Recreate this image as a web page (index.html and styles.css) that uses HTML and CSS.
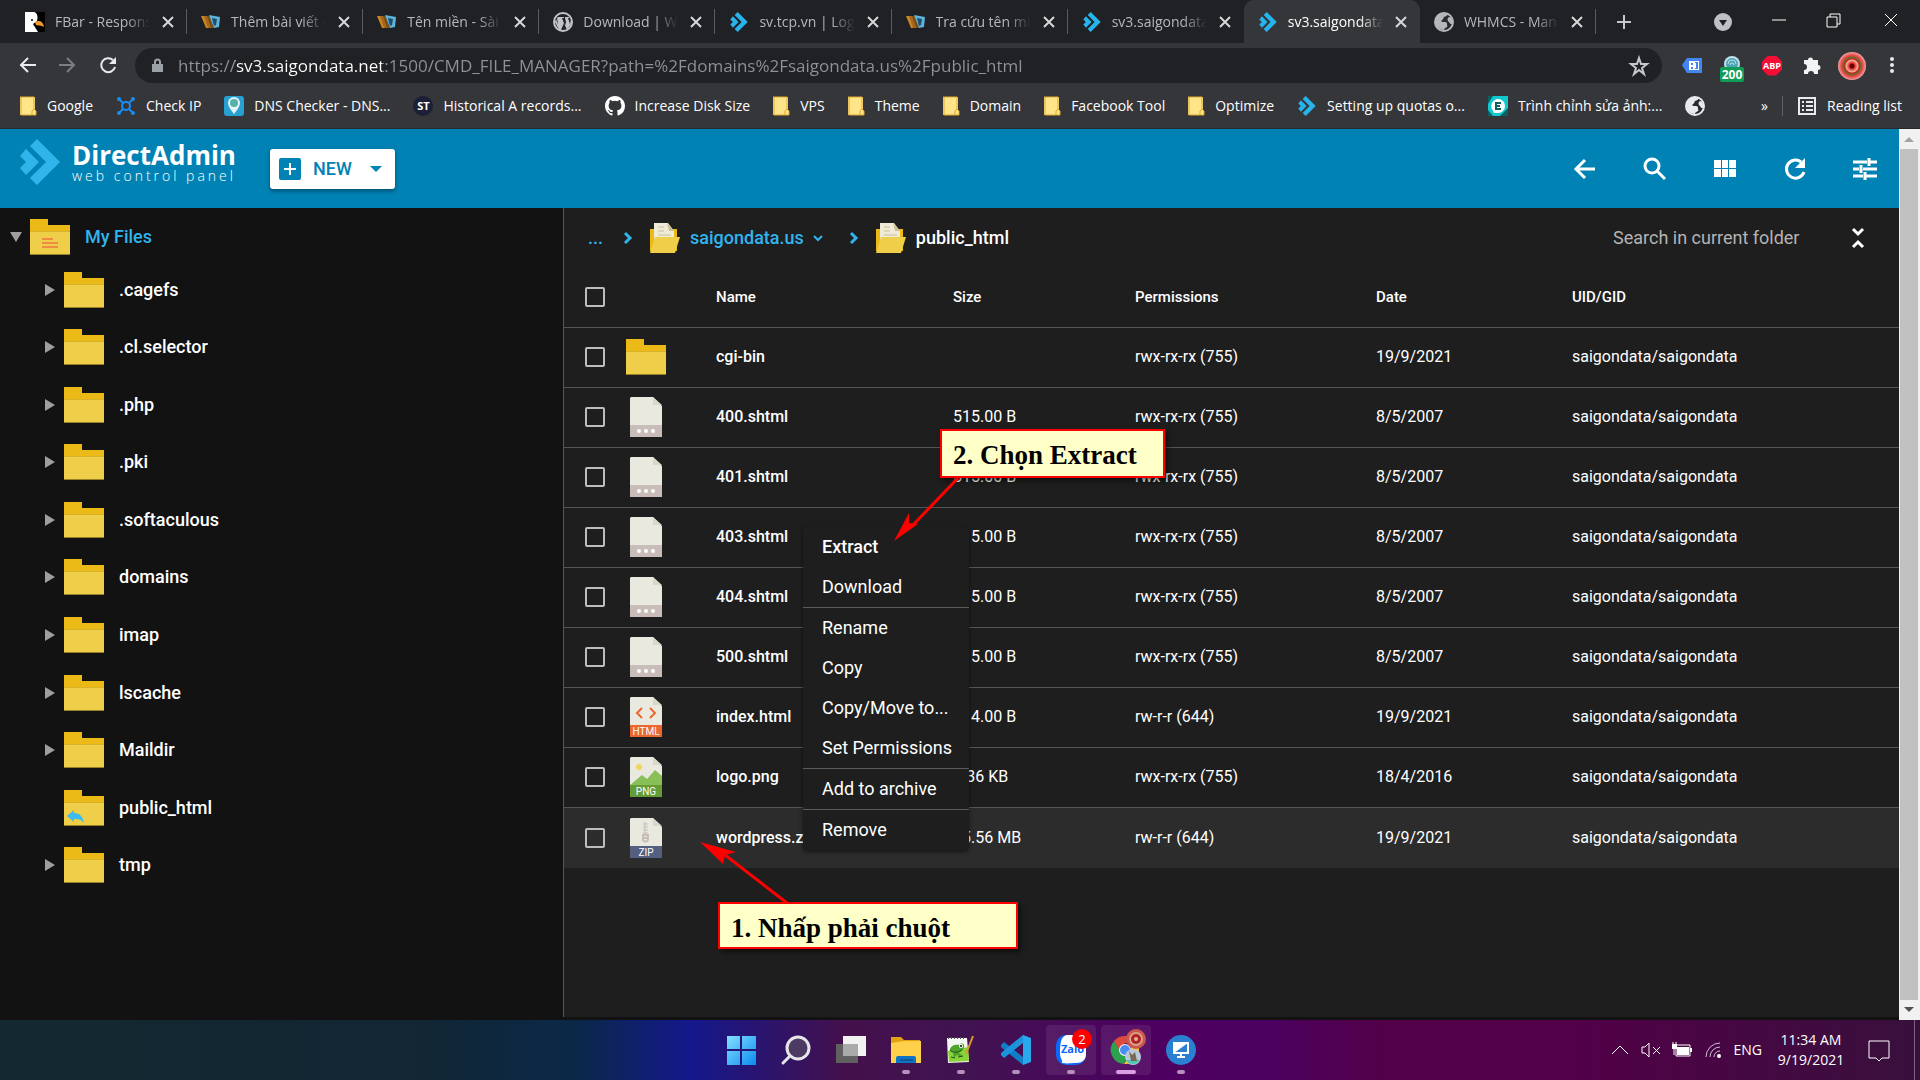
FILE: index.html
```html
<!DOCTYPE html>
<html lang="vi">
<head>
    <meta charset="UTF-8">
    <meta name="viewport" content="width=device-width, initial-scale=1.0">
    <title>File Manager</title>
    <link rel="stylesheet" href="styles.css">
</head>
<body>
    <!-- shared icons -->
    <svg class="sprite" aria-hidden="true">
        <symbol id="da" viewBox="0 0 40 46"><path fill="currentColor" d="M17 0l23 23-23 23-7-7 16-16L10 7zM6 10l13 13L6 36l-6-7 6-6-6-6z"/></symbol>
        <symbol id="close" viewBox="0 0 16 16"><path d="M3 3l10 10M13 3L3 13" stroke="currentColor" stroke-width="2"/></symbol>
        <symbol id="nas" viewBox="0 0 20 20"><path fill="#c8862a" d="M0 4h4l4 12H5z"/><path fill="#a8681c" d="M3 4h4l4 12H7z"/><path fill="#7d4c12" d="M6 4h3l4 12h-3z"/><path fill="#5fb4dd" d="M8 3l11 2-1 10-5 1z"/><path fill="#1d4e6b" d="M11 6l5 1-1 6-2 1z"/></symbol>
        <symbol id="globe" viewBox="0 0 20 20"><circle cx="10" cy="10" r="9" fill="#292a2d" stroke="currentColor" stroke-width="2"/><path fill="currentColor" d="M1 10C1 5 4 1 9 1c2 0 3 0 5 1-1 2-2 2-4 3-1 1 0 2-2 3-1 1-1 2 1 2 3 0 4 0 4 2s1 2 0 3-3 1-3 3c-5 0-9-4-9-8zM15 5c2 0 4 3 4 6-2 2-3 1-4-1-2-1-2-4 0-5z"/></symbol>
        <symbol id="bm-folder" viewBox="0 0 17 20"><path fill="#ffe48a" d="M0 1h15v13h1v5H0z"/><path fill="none" stroke="#dfa92c" stroke-width="1" d="M0 1h14v12l2 2v4H1V1M12 19v-4l2-2"/></symbol>
        <symbol id="folder" viewBox="0 0 40 36"><path fill="#ebba16" d="M0 0h18v6h22v8H0z"/><path fill="#efce4a" d="M0 13h40v23H0z"/><path fill="#d9b22c" d="M0 12h40v1H0z"/><path fill="#967f28" d="M0 35h40v1H0z"/></symbol>
        <symbol id="folder-open" viewBox="0 0 30 30"><path fill="#ebba16" d="M0 6h27v22H0z"/><path fill="#f0ebd8" d="M4 0h14l6 8v16H4z"/><path fill="#cfbf8c" d="M17 0l7 8h-5z"/><path stroke="#c9bf9c" d="M8 4h6M8 8h6M8 12h13"/><path fill="#efce4a" d="M5 14h25l-5 16H0z"/></symbol>
        <symbol id="file" viewBox="0 0 32 40"><path fill="#e9e9e0" d="M1 0h22l9 9v31H0V1z"/><path fill="#d9d7ca" d="M23 0v8h9z"/></symbol>
        <symbol id="file-any" viewBox="0 0 32 40"><use href="#file"/><path fill="#c8bdb8" d="M0 28h32v12H0z"/><circle cx="9" cy="34" r="2" fill="#fff"/><circle cx="16" cy="34" r="2" fill="#fff"/><circle cx="23" cy="34" r="2" fill="#fff"/></symbol>
        <symbol id="tri-right" viewBox="0 0 12 12"><path fill="#9e9e9e" d="M1 0l10 6-10 6z"/></symbol>
        <symbol id="chev" viewBox="0 0 10 14"><path fill="none" stroke="#31b4ee" stroke-width="3" d="M2 2l5 5-5 5"/></symbol>
    </svg>

    <!-- browser tabs -->
    <header class="tabstrip">
        <div class="tabs">
            <div class="tab"><svg class="fav" viewBox="0 0 20 20"><path d="M0 0h20v20H0z"/><path fill="#fff" d="M0 0h9c4 1 4 6 3 9l-4 3 5 8H0z"/><path fill="#f29a2e" d="M10 10c4-2 8-1 9 5-3-2-6-1-8-2z"/><circle cx="7" cy="8" r="1"/></svg><span class="tab-title">FBar - Responsive</span><button class="tab-close" aria-label="Close"><svg><use href="#close"/></svg></button></div>
            <div class="tab"><svg class="fav"><use href="#nas"/></svg><span class="tab-title">Thêm bài viết ‹ Sài</span><button class="tab-close" aria-label="Close"><svg><use href="#close"/></svg></button></div>
            <div class="tab"><svg class="fav"><use href="#nas"/></svg><span class="tab-title">Tên miền - Sài Gòn</span><button class="tab-close" aria-label="Close"><svg><use href="#close"/></svg></button></div>
            <div class="tab"><svg class="fav" viewBox="0 0 20 20"><circle cx="10" cy="10" r="9" fill="none" stroke="#c3c4c7" stroke-width="2"/><path fill="#c3c4c7" d="M3 7l4 11-2-2-3-6zM5 5h6v1h-2l3 8 1-4-1-4V5h4v1h-1l2 6 1-4v4l-4 6-3-7-3 7h-2L4 6z"/></svg><span class="tab-title">Download | WordPress</span><button class="tab-close" aria-label="Close"><svg><use href="#close"/></svg></button></div>
            <div class="tab"><svg class="fav da"><use href="#da"/></svg><span class="tab-title">sv.tcp.vn | Login</span><button class="tab-close" aria-label="Close"><svg><use href="#close"/></svg></button></div>
            <div class="tab"><svg class="fav"><use href="#nas"/></svg><span class="tab-title">Tra cứu tên miền</span><button class="tab-close" aria-label="Close"><svg><use href="#close"/></svg></button></div>
            <div class="tab before-active"><svg class="fav da"><use href="#da"/></svg><span class="tab-title">sv3.saigondata.net</span><button class="tab-close" aria-label="Close"><svg><use href="#close"/></svg></button></div>
            <div class="tab active"><svg class="fav da"><use href="#da"/></svg><span class="tab-title">sv3.saigondata.net</span><button class="tab-close" aria-label="Close"><svg><use href="#close"/></svg></button></div>
            <div class="tab"><svg class="fav"><use href="#globe"/></svg><span class="tab-title">WHMCS - Manage</span><button class="tab-close" aria-label="Close"><svg><use href="#close"/></svg></button></div>
        </div>
        <div class="window-tools">
            <button aria-label="New tab"><svg viewBox="0 0 20 20"><path d="M10 3v14M3 10h14" stroke="#c6c8cb" stroke-width="2"/></svg></button>
            <button class="push" aria-label="Search tabs"><svg viewBox="0 0 20 20"><circle cx="10" cy="10" r="9" fill="#bdc1c6"/><path fill="#202124" d="M6 8h8l-4 6z"/></svg></button>
            <button aria-label="Minimize"><svg viewBox="0 0 20 20"><path d="M3 8h14" stroke="#fff"/></svg></button>
            <button aria-label="Restore"><svg viewBox="0 0 20 20"><path d="M2 5h10v10H2zM5 5V2h10v10h-3" fill="none" stroke="#fff"/></svg></button>
            <button aria-label="Close window"><svg viewBox="0 0 20 20"><path d="M4 2l12 12M16 2L4 14" stroke="#fff"/></svg></button>
        </div>
    </header>

    <!-- address bar -->
    <div class="toolbar">
        <button aria-label="Back"><svg viewBox="0 0 20 20"><path d="M18 9H3M10 2L3 9l7 7" fill="none" stroke="#e8eaed" stroke-width="2"/></svg></button>
        <button aria-label="Forward"><svg viewBox="0 0 20 20"><path d="M1 9h15M9 2l7 7-7 7" fill="none" stroke="#7c7e82" stroke-width="2"/></svg></button>
        <button aria-label="Reload"><svg viewBox="0 0 20 20"><path d="M15 4a7 7 0 1 0 2 7" fill="none" stroke="#e8eaed" stroke-width="2"/><path fill="#e8eaed" d="M18 1v7h-7z"/></svg></button>
        <div class="omnibox">
            <svg class="lock" viewBox="0 0 12 16"><path fill="#9aa0a6" d="M0 6h11v8H0z"/><path d="M3 7V4a2 2 0 0 1 5 0v3" fill="none" stroke="#9aa0a6" stroke-width="2"/></svg>
            <input class="url" type="text" aria-label="Address" value="https://sv3.saigondata.net:1500/CMD_FILE_MANAGER?path=%2Fdomains%2Fsaigondata.us%2Fpublic_html">
            <svg class="star" viewBox="0 0 20 20"><path d="M10 2l2 6h6l-5 4 2 6-5-4-5 4 2-6-5-4h6z" fill="none" stroke="#c6c8cb" stroke-width="2"/></svg>
        </div>
        <div class="extensions">
            <button aria-label="Tag"><svg viewBox="0 0 20 20"><path fill="#4285f4" d="M5 2h15v15H5l-5-8z"/><path fill="#fff" d="M7 5h10v9H7z"/><path fill="#4285f4" d="M9 7h2v2H9zM9 11h2v2H9zM13 6h3v7h-3v-1h1V7h-1z"/></svg></button>
            <button class="dns-ext" aria-label="DNS"><svg viewBox="0 0 20 20"><circle cx="10" cy="8" r="8" fill="#bfe3ea"/><circle cx="10" cy="8" r="6" fill="#4ba3b5"/><path d="M6 8a4 4 0 0 1 8 0M8 9a2 2 0 0 1 4 0" fill="none" stroke="#bfe3ea"/></svg><span class="ext-count">200</span></button>
            <button class="abp" aria-label="Adblock">ABP</button>
            <button aria-label="Extensions"><svg viewBox="0 0 20 20"><path fill="#f1f3f4" d="M2 4h4a2 2 0 1 1 5 0h5v5a2 2 0 1 1 0 5v4h-4a3 3 0 0 0-6 0H2v-4a3 3 0 0 0 0-6z"/></svg></button>
            <button class="avatar" aria-label="Profile"></button>
            <button aria-label="Menu"><svg viewBox="0 0 20 20"><circle cx="10" cy="3" r="2" fill="#e8eaed"/><circle cx="10" cy="9" r="2" fill="#e8eaed"/><circle cx="10" cy="15" r="2" fill="#e8eaed"/></svg></button>
        </div>
    </div>

    <!-- bookmarks -->
    <nav class="bookmarks">
        <a href="#"><svg class="bm"><use href="#bm-folder"/></svg>Google</a>
        <a href="#"><svg viewBox="0 0 20 20"><path d="M3 3l4 4M17 3l-4 4M3 17l4-4M17 17l-4-4" stroke="#1b8cf0" stroke-width="2"/><circle cx="10" cy="10" r="4" fill="none" stroke="#1b8cf0" stroke-width="2"/><circle cx="3" cy="3" r="2" fill="#1b8cf0"/><circle cx="17" cy="3" r="2" fill="#1b8cf0"/><circle cx="3" cy="17" r="2" fill="#1b8cf0"/><circle cx="17" cy="17" r="2" fill="#1b8cf0"/></svg>Check IP</a>
        <a href="#"><svg viewBox="0 0 20 20"><rect width="20" height="20" rx="3" fill="#27a0d2"/><path fill="#e6f4f8" d="M10 1a6 6 0 0 1 6 6c0 4-6 11-6 11S4 11 4 7a6 6 0 0 1 6-6z"/><circle cx="10" cy="7" r="4" fill="#55b0a8"/></svg>DNS Checker - DNS...</a>
        <a href="#"><span class="st">ST</span>Historical A records...</a>
        <a href="#"><svg viewBox="0 0 16 16"><path fill="#fff" d="M8 0C3.58 0 0 3.58 0 8c0 3.54 2.29 6.53 5.47 7.59.4.07.55-.17.55-.38 0-.19-.01-.82-.01-1.49-2.01.37-2.53-.49-2.69-.94-.09-.23-.48-.94-.82-1.13-.28-.15-.68-.52-.01-.53.63-.01 1.08.58 1.23.82.72 1.21 1.87.87 2.33.66.07-.52.28-.87.51-1.07-1.78-.2-3.64-.89-3.64-3.95 0-.87.31-1.59.82-2.15-.08-.2-.36-1.02.08-2.12 0 0 .67-.21 2.2.82a7.6 7.6 0 0 1 4 0c1.53-1.04 2.2-.82 2.2-.82.44 1.1.16 1.92.08 2.12.51.56.82 1.27.82 2.15 0 3.07-1.87 3.75-3.65 3.95.29.25.54.73.54 1.48 0 1.07-.01 1.93-.01 2.2 0 .21.15.46.55.38A8 8 0 0 0 16 8c0-4.42-3.58-8-8-8z"/></svg>Increase Disk Size</a>
        <a href="#"><svg class="bm"><use href="#bm-folder"/></svg>VPS</a>
        <a href="#"><svg class="bm"><use href="#bm-folder"/></svg>Theme</a>
        <a href="#"><svg class="bm"><use href="#bm-folder"/></svg>Domain</a>
        <a href="#"><svg class="bm"><use href="#bm-folder"/></svg>Facebook Tool</a>
        <a href="#"><svg class="bm"><use href="#bm-folder"/></svg>Optimize</a>
        <a href="#"><svg class="da"><use href="#da"/></svg>Setting up quotas o...</a>
        <a href="#"><svg viewBox="0 0 20 20"><path fill="#11c9cc" d="M0 0h20v20H0z"/><path fill="#0c5f63" d="M0 8l5-8H0zM20 12v8h-8zM0 14v6h5z"/><path fill="#fff" d="M10 3a7 7 0 1 1 0 14H6l-2-4a7 7 0 0 1 6-10z"/><path d="M13 7H8v6h5M8 10h4" fill="none" stroke="#0c5f63" stroke-width="2"/></svg>Trình chỉnh sửa ảnh:...</a>
        <a href="#" aria-label="Site"><svg class="light"><use href="#globe"/></svg></a>
        <div class="reading">
            <button class="more">»</button>
            <button class="list"><svg viewBox="0 0 20 20"><path d="M2 2h16v16H2z" fill="none" stroke="#e8eaed" stroke-width="2"/><path d="M5 6h2M9 6h7M5 10h2M9 10h7M5 14h2M9 14h7" stroke="#e8eaed" stroke-width="2"/></svg>Reading list</button>
        </div>
    </nav>

    <div class="page">
        <div class="app">
            <header class="app-header">
                <a class="logo" href="#">
                    <svg viewBox="0 0 40 46"><use href="#da"/></svg>
                    <span class="logo-text"><b>DirectAdmin</b><small>web control panel</small></span>
                </a>
                <button class="new-btn"><svg class="plus" viewBox="0 0 22 22"><rect width="22" height="22" rx="2" fill="#0082b5"/><path d="M11 5v12M5 11h12" stroke="#fff" stroke-width="2"/></svg>NEW<svg class="caret" viewBox="0 0 12 6"><path fill="#0082b5" d="M0 0h12L6 6z"/></svg></button>
                <div class="app-actions">
                    <button aria-label="Back"><svg viewBox="0 0 24 24"><path d="M22 12H4M12 3l-9 9 9 9" fill="none" stroke="#fff" stroke-width="3"/></svg></button>
                    <button aria-label="Search"><svg viewBox="0 0 24 24"><circle cx="9" cy="9" r="7" fill="none" stroke="#fff" stroke-width="3"/><path d="M14 14l8 8" stroke="#fff" stroke-width="3"/></svg></button>
                    <button aria-label="Grid"><svg viewBox="0 0 24 24"><path fill="#fff" d="M1 3h7v8H1zM9 3h6v8H9zM16 3h7v8h-7zM1 12h7v8H1zM9 12h6v8H9zM16 12h7v8h-7z"/></svg></button>
                    <button aria-label="Refresh"><svg viewBox="0 0 24 24"><path d="M18 5a9 9 0 1 0 3 10" fill="none" stroke="#fff" stroke-width="3"/><path fill="#fff" d="M22 1v10H12z"/></svg></button>
                    <button aria-label="Settings"><svg viewBox="0 0 24 24"><path d="M0 5h14M16 1v8M16 5h8M0 12h6M8 8v8M10 12h14M0 19h10M12 15v8M12 19h12" stroke="#fff" stroke-width="3"/></svg></button>
                </div>
            </header>

            <div class="files">
                <aside class="tree">
                    <a class="root" href="#">
                        <svg class="tri" viewBox="0 0 12 12"><path fill="#9e9e9e" d="M0 1h12L6 11z"/></svg>
                        <svg class="folder" viewBox="0 0 40 36"><use href="#folder"/><path d="M12 20h11M12 24h16M12 28h16" stroke="#ee8c3f" stroke-width="2"/></svg>
                        My Files
                    </a>
                    <ul>
                        <li><a href="#"><svg class="tri"><use href="#tri-right"/></svg><svg class="folder"><use href="#folder"/></svg>.cagefs</a></li>
                        <li><a href="#"><svg class="tri"><use href="#tri-right"/></svg><svg class="folder"><use href="#folder"/></svg>.cl.selector</a></li>
                        <li><a href="#"><svg class="tri"><use href="#tri-right"/></svg><svg class="folder"><use href="#folder"/></svg>.php</a></li>
                        <li><a href="#"><svg class="tri"><use href="#tri-right"/></svg><svg class="folder"><use href="#folder"/></svg>.pki</a></li>
                        <li><a href="#"><svg class="tri"><use href="#tri-right"/></svg><svg class="folder"><use href="#folder"/></svg>.softaculous</a></li>
                        <li><a href="#"><svg class="tri"><use href="#tri-right"/></svg><svg class="folder"><use href="#folder"/></svg>domains</a></li>
                        <li><a href="#"><svg class="tri"><use href="#tri-right"/></svg><svg class="folder"><use href="#folder"/></svg>imap</a></li>
                        <li><a href="#"><svg class="tri"><use href="#tri-right"/></svg><svg class="folder"><use href="#folder"/></svg>lscache</a></li>
                        <li><a href="#"><svg class="tri"><use href="#tri-right"/></svg><svg class="folder"><use href="#folder"/></svg>Maildir</a></li>
                        <li><a href="#"><svg class="tri"></svg><svg class="folder" viewBox="0 0 40 36"><use href="#folder"/><path fill="#3cbcf0" d="M3 26l7-6v3c6 0 9 4 10 10-3-4-6-4-10-4v3z"/></svg>public_html</a></li>
                        <li><a href="#"><svg class="tri"><use href="#tri-right"/></svg><svg class="folder"><use href="#folder"/></svg>tmp</a></li>
                    </ul>
                </aside>

                <main class="content">
                    <div class="crumbs">
                        <a href="#">...</a>
                        <svg class="chev"><use href="#chev"/></svg>
                        <a class="crumb" href="#"><svg class="open"><use href="#folder-open"/></svg>saigondata.us<svg class="down" viewBox="0 0 10 10"><path d="M1 3l4 4 4-4" fill="none" stroke="#31b4ee" stroke-width="2"/></svg></a>
                        <svg class="chev second"><use href="#chev"/></svg>
                        <a class="crumb current" href="#"><svg class="open"><use href="#folder-open"/></svg>public_html</a>
                        <input class="search" type="text" placeholder="Search in current folder" aria-label="Search in current folder">
                        <button class="collapse" aria-label="Collapse"><svg viewBox="0 0 14 22"><path d="M2 2l5 5 5-5M2 20l5-5 5 5" fill="none" stroke="#fff" stroke-width="3"/></svg></button>
                    </div>

                    <table>
                        <thead>
                            <tr><th class="c-check"><input type="checkbox" aria-label="Select all"></th><th class="c-icon"></th><th class="c-name">Name</th><th class="c-size">Size</th><th class="c-perm">Permissions</th><th class="c-date">Date</th><th>UID/GID</th></tr>
                        </thead>
                        <tbody>
                            <tr><td><input type="checkbox" aria-label="cgi-bin"></td><td><svg class="folder"><use href="#folder"/></svg></td><td class="name">cgi-bin</td><td></td><td>rwx-rx-rx (755)</td><td>19/9/2021</td><td>saigondata/saigondata</td></tr>
                            <tr><td><input type="checkbox" aria-label="400.shtml"></td><td><svg class="file"><use href="#file-any"/></svg></td><td class="name">400.shtml</td><td>515.00 B</td><td>rwx-rx-rx (755)</td><td>8/5/2007</td><td>saigondata/saigondata</td></tr>
                            <tr><td><input type="checkbox" aria-label="401.shtml"></td><td><svg class="file"><use href="#file-any"/></svg></td><td class="name">401.shtml</td><td>515.00 B</td><td>rwx-rx-rx (755)</td><td>8/5/2007</td><td>saigondata/saigondata</td></tr>
                            <tr><td><input type="checkbox" aria-label="403.shtml"></td><td><svg class="file"><use href="#file-any"/></svg></td><td class="name">403.shtml</td><td>515.00 B</td><td>rwx-rx-rx (755)</td><td>8/5/2007</td><td>saigondata/saigondata</td></tr>
                            <tr><td><input type="checkbox" aria-label="404.shtml"></td><td><svg class="file"><use href="#file-any"/></svg></td><td class="name">404.shtml</td><td>515.00 B</td><td>rwx-rx-rx (755)</td><td>8/5/2007</td><td>saigondata/saigondata</td></tr>
                            <tr><td><input type="checkbox" aria-label="500.shtml"></td><td><svg class="file"><use href="#file-any"/></svg></td><td class="name">500.shtml</td><td>515.00 B</td><td>rwx-rx-rx (755)</td><td>8/5/2007</td><td>saigondata/saigondata</td></tr>
                            <tr><td><input type="checkbox" aria-label="index.html"></td><td><svg class="file" viewBox="0 0 32 40"><use href="#file"/><path d="M12 11l-5 5 5 5M20 11l5 5-5 5" fill="none" stroke="#ec6630" stroke-width="2"/><path fill="#ec6630" d="M0 28h32v12H0z"/><text x="16" y="38">HTML</text></svg></td><td class="name">index.html</td><td>414.00 B</td><td>rw-r-r (644)</td><td>19/9/2021</td><td>saigondata/saigondata</td></tr>
                            <tr><td><input type="checkbox" aria-label="logo.png"></td><td><svg class="file" viewBox="0 0 32 40"><use href="#file"/><circle cx="9" cy="10" r="3" fill="#f3d55b"/><path fill="#88c057" d="M0 28l12-10 5 4 8-9 7 6v9z"/><path fill="#659c35" d="M0 28h32v12H0z"/><text x="16" y="38">PNG</text></svg></td><td class="name">logo.png</td><td>3.36 KB</td><td>rwx-rx-rx (755)</td><td>18/4/2016</td><td>saigondata/saigondata</td></tr>
                            <tr class="selected"><td><input type="checkbox" aria-label="wordpress.zip"></td><td><svg class="file" viewBox="0 0 32 40"><use href="#file"/><path d="M15 4v14M13 6h5M13 9h5M13 12h5M13 15h5" stroke="#c8bdb8"/><path d="M13 17h5v4a2 2 0 0 1-5 0zM14 20h3" fill="none" stroke="#c8bdb8" stroke-width="2"/><path fill="#556080" d="M0 28h32v12H0z"/><text x="16" y="38">ZIP</text></svg></td><td class="name">wordpress.zip</td><td>15.56 MB</td><td>rw-r-r (644)</td><td>19/9/2021</td><td>saigondata/saigondata</td></tr>
                        </tbody>
                    </table>

                    <!-- right click menu -->
                    <div class="menu">
                        <button class="strong">Extract</button>
                        <button>Download</button>
                        <hr>
                        <button>Rename</button>
                        <button>Copy</button>
                        <button>Copy/Move to...</button>
                        <button>Set Permissions</button>
                        <hr>
                        <button>Add to archive</button>
                        <hr>
                        <button>Remove</button>
                    </div>

                    <!-- step notes -->
                    <div class="note step2">2. Chọn Extract
                        <svg class="arrow" viewBox="0 0 70 66"><path d="M64 2L18 50" stroke="#f00" stroke-width="3"/><path fill="#f00" d="M0 65l15-28v10l9 1z"/></svg>
                    </div>
                    <div class="note step1">1. Nhấp phải chuột
                        <svg class="arrow" viewBox="0 0 76 62"><path d="M74 61L12 13" stroke="#f00" stroke-width="3"/><path fill="#f00" d="M-13 0l36 10-11 3-2 9z"/></svg>
                    </div>
                </main>
            </div>
        </div>
        <div class="scrollbar">
            <svg viewBox="0 0 20 20"><path fill="#a3a3a3" d="M5 13h10l-5-5z"/></svg>
            <div class="thumb"></div>
            <svg viewBox="0 0 20 20"><path fill="#505050" d="M5 7h10l-5 5z"/></svg>
        </div>
    </div>

    <footer class="taskbar">
        <div class="apps">
            <button aria-label="Start"><svg viewBox="0 0 30 30"><defs><linearGradient id="win" x1="0" y1="0" x2="1" y2="1"><stop offset="0" stop-color="#86e0ff"/><stop offset="1" stop-color="#0a8cf0"/></linearGradient></defs><path fill="url(#win)" d="M1 1h13v13H1zM16 1h14v13H16zM1 16h13v14H1zM16 16h14v14H16z"/></svg></button>
            <button aria-label="Search"><svg viewBox="0 0 30 30"><circle cx="17" cy="13" r="11" fill="#4d3a63" stroke="#e6e6ea" stroke-width="3"/><path d="M9 21l-7 7" stroke="#e6e6ea" stroke-width="3" stroke-linecap="round"/></svg></button>
            <button aria-label="Task view"><svg viewBox="0 0 30 30"><path fill="#606060" d="M0 9h22v19H0z"/><path fill="#f2f2f2" d="M7 1h23v20H7z"/><path fill="#aaa" d="M7 9h15v12H7z"/></svg></button>
            <button class="open-app" aria-label="Explorer"><svg viewBox="0 0 30 30"><path fill="#e2a210" d="M0 2h10l3 3h16v6H0z"/><path fill="#ffd04a" d="M0 8l13-2h17v22H0z"/><path fill="#0f73c4" d="M5 28v-5a2 2 0 0 1 2-2h16a2 2 0 0 1 2 2v5z"/><path d="M9 25h13" stroke="#0a3e78"/></svg></button>
            <button class="open-app" aria-label="Notepad++"><svg viewBox="0 0 30 30"><path fill="#f4f6f2" d="M1 3h20l2 24-21 1z"/><path fill="#8ad23a" d="M2 16l20-4 1 14-20 1z"/><path fill="#4fa52a" d="M4 15c0-4 5-6 9-5 3-3 6-1 5 2 0 3-3 5-7 5-3 1-6 0-7-2zM7 18l5-1 4 3-1 2-4-2-3 3z"/><circle cx="15" cy="11" r="2" fill="#fff"/><circle cx="15" cy="11" r="1"/><path d="M4 15c2 3 8 3 12 0M5 22l4 1M12 22l5-1" fill="none" stroke="#1c4a1c"/><path stroke="#555" stroke-dasharray="1 2" stroke-width="2" d="M2 3h18"/><path d="M27 1l-7 18" stroke="#d99a2b" stroke-width="2"/></svg></button>
            <button class="open-app" aria-label="VS Code"><svg viewBox="0 0 30 30"><path fill="#0f7fc8" d="M0 10l3-3 19 15v8L0 12z"/><path fill="#1c94dc" d="M0 20l3 3L22 8V0L0 18z"/><path fill="#2aa8ee" d="M22 0l8 3v24l-8 3z"/></svg></button>
            <button class="open-app lit" aria-label="Zalo"><svg viewBox="0 0 30 30"><rect width="30" height="30" rx="10" fill="#0a68ff"/><path fill="#fff" d="M12 0h9c6 0 9 4 9 9v10c0 6-4 9-10 9-5 0-8 1-14 0 1-3-2-4-2-10C4 8 5 0 12 0z"/></svg><span class="zalo">Zalo</span><span class="badge">2</span></button>
            <button class="open-app lit focus" aria-label="Chrome"><svg viewBox="0 0 30 30"><path fill="#e04a3c" d="M3 6a14 14 0 0 1 23 2H14l-6 7z"/><path fill="#2ca24c" d="M3 6l7 12 6 2-3 9A14 14 0 0 1 3 6z"/><path fill="#fbc726" d="M26 8a14 14 0 0 1-13 21l7-12v-6z"/><circle cx="14" cy="15" r="6" fill="#fff"/><circle cx="14" cy="15" r="5" fill="#4a8cf5"/><circle cx="25" cy="4" r="10" fill="#c9574c"/><circle cx="25" cy="4" r="7" fill="#d9a184"/><circle cx="25" cy="4" r="5" fill="#b3222a"/><circle cx="25" cy="4" r="2" fill="#e4b28e"/><circle cx="22" cy="22" r="8" fill="#b9c9d9"/><path fill="#4cc9b0" d="M15 25h14a8 8 0 0 1-14 0z"/><path fill="#7a6a55" d="M18 16l3 4 3-3 2 9h-6z"/></svg></button>
            <button class="open-app" aria-label="Remote"><svg viewBox="0 0 30 30"><circle cx="15" cy="15" r="15" fill="#2a7fd0"/><path d="M8 8h14v10H8zM11 22h8M15 18v4" fill="none" stroke="#fff" stroke-width="2"/><path fill="#fff" d="M8 18V8h14z"/></svg></button>
        </div>
        <div class="tray">
            <svg viewBox="0 0 20 20"><path d="M2 14l8-8 8 8" fill="none" stroke="#fff" stroke-width="1"/></svg>
            <svg viewBox="0 0 20 20"><path d="M1 7h3l4-4v14l-4-4H1zM12 7l7 7M19 7l-7 7" fill="none" stroke="#fff"/></svg>
            <svg viewBox="0 0 20 20"><path fill="none" stroke="#fff" d="M4 5h14v11H4z"/><path fill="#fff" d="M5 7h12v8H5zM18 8h2v4h-2zM0 4h5v5H0z"/><path stroke="#fff" d="M1 2v3M4 2v3M2 9v6"/></svg>
            <svg viewBox="0 0 20 20"><path d="M3 17A14 14 0 0 1 17 3M7 17A10 10 0 0 1 17 7M11 17a6 6 0 0 1 6-6" fill="none" stroke="#cdbcd2" stroke-width="1"/><circle cx="16" cy="16" r="2" fill="#fff"/></svg>
            <span>ENG</span>
            <time>11:34 AM<br>9/19/2021</time>
            <svg class="notice" viewBox="0 0 22 22"><path d="M1 2h20v17h-7l-3 3-3-3H1z" fill="none" stroke="#fff"/></svg>
        </div>
    </footer>
</body>
</html>
```

FILE: styles.css
```css
* {
    box-sizing: border-box;
}

body {
    margin: 0;
    min-height: 100vh;
    display: flex;
    flex-direction: column;
    background: #121212;
    color: #fff;
    font-family: "Segoe UI", "Open Sans", sans-serif;
    font-size: 14px;
    line-height: 20px;
}

a {
    color: inherit;
    text-decoration: none;
}

button {
    border: 0;
    padding: 0;
    background: none;
    color: inherit;
    font: inherit;
}

svg {
    display: block;
    flex: none;
    width: 20px;
    height: 20px;
    overflow: visible;
}

.sprite {
    position: absolute;
    width: 0;
    height: 0;
}

.da {
    color: #27b4ec;
}

/* browser chrome */
.tabstrip {
    display: flex;
    height: 43px;
    padding-left: 11px;
    background: #202124;
}

.tabs {
    flex: 1;
    display: flex;
    min-width: 0;
}

.tab {
    flex: 1 1 0;
    min-width: 0;
    display: flex;
    align-items: center;
    padding: 0 11px 0 14px;
    color: #b4b8bd;
    background: linear-gradient(#5a5b5f, #5a5b5f) right center / 1px 25px no-repeat;
}

.tab.before-active {
    background: none;
}

.tab.active {
    background: #35363a;
    color: #fff;
    border-radius: 10px 10px 0 0;
}

.tab-title {
    flex: 1;
    min-width: 0;
    margin: 0 10px;
    overflow: hidden;
    white-space: nowrap;
    mask-image: linear-gradient(90deg, #000 75%, transparent);
}

.tab-close {
    color: #d5d7da;
}

.tab-close svg {
    width: 16px;
    height: 16px;
}

.window-tools {
    width: 324px;
    display: flex;
    align-items: center;
    gap: 36px;
    padding: 0 19px 0 18px;
}

.push {
    margin-left: auto;
}

.toolbar {
    display: flex;
    align-items: center;
    gap: 20px;
    height: 45px;
    padding: 0 18px;
    background: #35363a;
}

.omnibox {
    flex: 1;
    display: flex;
    align-items: center;
    height: 35px;
    margin-left: -3px;
    padding: 0 13px 0 17px;
    border-radius: 18px;
    background: #202124;
}

.lock {
    width: 12px;
    height: 16px;
}

.url {
    flex: 1;
    margin: 0 14px;
    padding: 0;
    border: 0;
    outline: 0;
    font: inherit;
    font-size: 17px;
    color: transparent;
    background: linear-gradient(90deg, #8f9398 57px, #fff 57px, #fff 204px, #8f9398 204px);
    background-clip: text;
}

.extensions {
    display: flex;
    align-items: center;
    gap: 20px;
}

.dns-ext {
    position: relative;
}

.ext-count {
    position: absolute;
    top: 11px;
    left: -2px;
    width: 24px;
    height: 15px;
    border-radius: 2px;
    background: #0f9d58;
    font-size: 12px;
    font-weight: 700;
    line-height: 15px;
}

.abp {
    width: 20px;
    height: 20px;
    background: #f40d35;
    clip-path: polygon(30% 0, 70% 0, 100% 30%, 100% 70%, 70% 100%, 30% 100%, 0 70%, 0 30%);
    font-size: 9px;
    font-weight: 700;
}

.avatar {
    width: 28px;
    height: 28px;
    margin: 0 -4px;
    border-radius: 50%;
    background: radial-gradient(circle, #600 2px, #e3322f 3px, #f4b49c 6px, #c81f23 7px, #5d7a2c 9px, #e33a3a 10px, #f2a0a0 14px);
}

.bookmarks {
    display: flex;
    align-items: center;
    gap: 23px;
    height: 41px;
    padding: 0 18px 5px 20px;
    background: #35363a;
    border-bottom: 1px solid #27282b;
    white-space: nowrap;
}

.bookmarks a,
.list {
    display: flex;
    align-items: center;
    gap: 10px;
}

.bm {
    width: 17px;
}

.st {
    width: 20px;
    border-radius: 50%;
    background: #1c1f35;
    font-size: 11px;
    font-weight: 700;
    text-align: center;
}

.light {
    color: #e8eaed;
}

.reading {
    display: flex;
    gap: 14px;
    margin-left: auto;
}

.list {
    padding-left: 14px;
    border-left: 1px solid #5f6165;
}

/* panel */
.page {
    flex: 1;
    display: flex;
    font-family: Roboto, sans-serif;
}

.app {
    flex: 1;
    display: flex;
    flex-direction: column;
    padding-bottom: 3px;
}

.app-header {
    display: flex;
    align-items: center;
    height: 79px;
    padding: 0 20px;
    background: #0082b5;
}

.logo {
    display: flex;
    gap: 12px;
    width: 250px;
    padding-bottom: 14px;
}

.logo svg {
    width: 40px;
    height: 46px;
    color: #30b5ea;
}

.logo-text {
    display: flex;
    flex-direction: column;
    padding-top: 2px;
    font-family: "Open Sans", sans-serif;
}

.logo-text b {
    font-size: 26px;
    line-height: 28px;
}

.logo-text small {
    font-size: 14px;
    font-weight: 300;
    line-height: 14px;
    letter-spacing: 3px;
}

.new-btn {
    display: flex;
    align-items: center;
    width: 125px;
    height: 40px;
    padding: 0 13px 0 9px;
    border-radius: 3px;
    background: #fff;
    box-shadow: 0 2px 4px rgba(0, 0, 0, .4);
    color: #0082b5;
    font-size: 18px;
    font-weight: 500;
}

.plus {
    width: 22px;
    height: 22px;
    margin-right: 12px;
}

.caret {
    width: 12px;
    height: 6px;
    margin-left: auto;
}

.app-actions {
    display: flex;
    gap: 46px;
    margin-left: auto;
    padding-right: 2px;
}

.app-actions svg {
    width: 24px;
    height: 24px;
}

.files {
    flex: 1;
    display: grid;
    grid-template-columns: 564px 1fr;
}

.tree {
    border-right: 1px solid #555;
    font-size: 18px;
    font-weight: 500;
}

.tree a {
    display: flex;
    align-items: center;
}

.tree .root {
    height: 53px;
    padding: 5px 0 0 10px;
    color: #31b4ee;
}

.tree ul {
    display: grid;
    grid-auto-rows: 1fr;
    min-height: 633px;
    margin: 0;
    padding: 0 0 0 44px;
    list-style: none;
}

.tree li {
    display: grid;
}

.tri {
    width: 12px;
    height: 12px;
    margin-right: 8px;
}

.folder {
    width: 40px;
    height: 36px;
}

.tree .folder {
    margin-right: 15px;
}

.content {
    position: relative;
    background: #1e1e1e;
}

.crumbs {
    display: flex;
    align-items: center;
    height: 59px;
    padding: 0 34px 0 24px;
    color: #31b4ee;
    font-size: 18px;
    font-weight: 500;
}

.chev {
    width: 10px;
    height: 14px;
    margin: 0 17px 0 20px;
}

.chev.second {
    margin-left: 26px;
}

.crumb {
    display: flex;
    align-items: center;
}

.open {
    width: 30px;
    height: 30px;
    margin-right: 10px;
}

.down {
    width: 10px;
    height: 10px;
    margin-left: 9px;
}

.current {
    color: #fff;
}

.search {
    width: 200px;
    margin-left: auto;
    padding: 0;
    border: 0;
    background: none;
    color: #fff;
    font: inherit;
    font-weight: 400;
}

.search::placeholder {
    color: #b4b4b4;
}

.collapse {
    margin-left: 38px;
}

.collapse svg {
    width: 14px;
    height: 22px;
}

table {
    width: 100%;
    table-layout: fixed;
    border-collapse: collapse;
    font-size: 16px;
}

th,
td {
    height: 60px;
    padding: 0;
    border-bottom: 1px solid #555;
    text-align: left;
}

th {
    font-size: 15px;
    font-weight: 500;
}

.c-check {
    width: 62px;
}

.c-icon {
    width: 90px;
}

.c-name {
    width: 237px;
}

.c-size {
    width: 182px;
}

.c-perm {
    width: 241px;
}

.c-date {
    width: 196px;
}

.name {
    font-weight: 500;
}

.selected {
    background: #2c2c2c;
}

.selected td {
    height: 61px;
    border-bottom: 0;
}

input[type="checkbox"] {
    appearance: none;
    display: block;
    width: 20px;
    height: 20px;
    margin: 0 0 0 21px;
    border: 2px solid #bdbdbd;
    border-radius: 2px;
}

.file {
    width: 32px;
    height: 40px;
    margin-left: 4px;
}

.file text {
    fill: #fff;
    font-size: 10px;
    text-anchor: middle;
}

.menu {
    position: absolute;
    top: 319px;
    left: 239px;
    width: 166px;
    border-radius: 4px;
    background: #1e1e1e;
    box-shadow: 0 2px 4px rgba(0, 0, 0, .5);
    font-size: 18px;
}

.menu button {
    display: block;
    width: 100%;
    height: 40px;
    padding-left: 19px;
    text-align: left;
}

.menu .strong {
    font-weight: 500;
}

.menu hr {
    margin: 0;
    border: 0;
    border-top: 1px solid #5c5c5c;
}

.note {
    position: absolute;
    padding: 4px 11px 0;
    border: 2px solid #f00;
    background: #ffffc8;
    box-shadow: 3px 3px 5px rgba(0, 0, 0, .5);
    color: #000;
    font: bold 27px/41px "Liberation Serif", serif;
}

.step2 {
    top: 221px;
    left: 376px;
    width: 225px;
    height: 49px;
}

.step1 {
    top: 694px;
    left: 154px;
    width: 300px;
    height: 47px;
}

.arrow {
    position: absolute;
}

.step2 .arrow {
    top: 45px;
    left: -48px;
    width: 70px;
    height: 66px;
}

.step1 .arrow {
    top: -62px;
    left: -7px;
    width: 76px;
    height: 62px;
}

.scrollbar {
    display: flex;
    flex-direction: column;
    width: 21px;
    background: #f1f1f1;
}

.thumb {
    flex: 1;
    margin: 0 2px 0 1px;
    background: #c1c1c1;
}

/* taskbar */
.taskbar {
    display: grid;
    grid-template-columns: 1fr auto 1fr;
    align-items: center;
    height: 60px;
    background: linear-gradient(90deg, #142830 0, #122634 22%, #0a2848 30%, #14188c 36%, #44104c 44%, #401450 50%, #4e0060 60%, #4c0060 66%, #520048 72%, #520048 82%, #38103c 100%);
}

.apps {
    grid-column: 2;
    display: flex;
    gap: 5px;
    padding-left: 2px;
}

.apps button {
    position: relative;
    display: flex;
    align-items: center;
    justify-content: center;
    width: 50px;
    height: 50px;
    border-radius: 4px;
}

.apps svg {
    width: 30px;
    height: 30px;
}

.apps .lit {
    background: rgba(255, 255, 255, .08);
}

.open-app::after {
    content: "";
    position: absolute;
    bottom: 1px;
    left: 21px;
    width: 8px;
    height: 4px;
    border-radius: 2px;
    background: #b491bd;
}

.focus::after {
    left: 15px;
    width: 20px;
    background: #dc9ee3;
}

.zalo {
    position: absolute;
    left: 15px;
    top: 14px;
    color: #0a68ff;
    font-size: 11px;
    font-weight: 700;
}

.badge {
    position: absolute;
    top: 4px;
    left: 26px;
    width: 20px;
    border-radius: 50%;
    background: #f00;
    font-size: 13px;
}

.tray {
    display: flex;
    align-items: center;
    justify-content: flex-end;
    gap: 11px;
    align-self: stretch;
    margin-right: 5px;
    padding-right: 24px;
    border-right: 1px solid #7d6580;
}

.tray time {
    width: 76px;
    text-align: center;
}

.tray .notice {
    width: 22px;
    height: 22px;
    margin-left: 8px;
}
```
